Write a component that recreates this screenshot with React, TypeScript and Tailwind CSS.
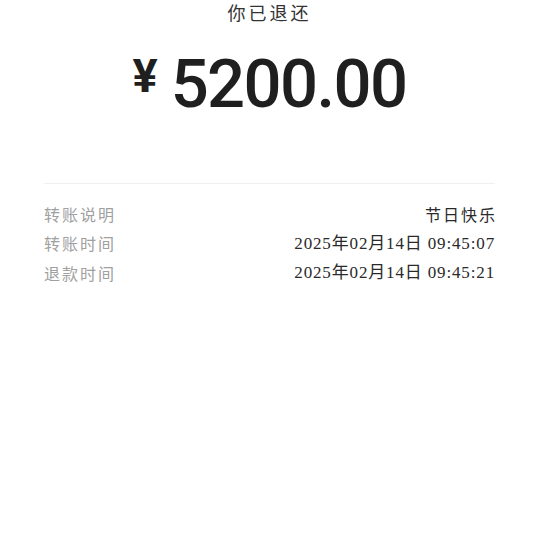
import React from "react";

const rows = [
  { label: "转账说明", value: "节日快乐", cjk: true },
  { label: "转账时间", value: "2025年02月14日 09:45:07", cjk: false },
  { label: "退款时间", value: "2025年02月14日 09:45:21", cjk: false },
];

const App = () => {
  return (
    <div className="w-[539px] h-[539px] bg-white overflow-hidden">
      <div className="flex flex-col items-center">
        <p className="mt-[3px] text-[18px] leading-[22px] tracking-[3px] text-[#333333] font-['Liberation_Serif','Noto_Sans_CJK_SC',serif]">
          你已退还
        </p>
        <div className="mt-[30px] flex items-start h-[70px] text-[#1f1f1f] font-['Roboto',sans-serif]">
          <span className="text-[47px] leading-[42px] font-bold mr-[13px]">¥</span>
          <span className="text-[67px] leading-[58px] font-medium tracking-[-1.6px]">5200.00</span>
        </div>
      </div>

      <div className="mx-[44px] mt-[58px] border-t border-[#f0f0f0]" />

      <div className="mx-[44px] mt-[15px] flex flex-col">
        {rows.map((row) => (
          <div key={row.label} className="flex items-center justify-between h-[29.5px]">
            <span className="text-[16px] tracking-[2px] text-[#a0a0a0] font-['Noto_Sans_CJK_SC',sans-serif]">
              {row.label}
            </span>
            <span
              className={
                row.cjk
                  ? "text-[16px] tracking-[2px] -mr-[2px] text-[#2a2a2a] font-['Noto_Sans_CJK_SC',sans-serif]"
                  : "text-[17px] tracking-[0.85px] text-[#2a2a2a] font-['Liberation_Serif','Noto_Sans_CJK_SC',serif]"
              }
            >
              {row.value}
            </span>
          </div>
        ))}
      </div>
    </div>
  );
};

export default App;
